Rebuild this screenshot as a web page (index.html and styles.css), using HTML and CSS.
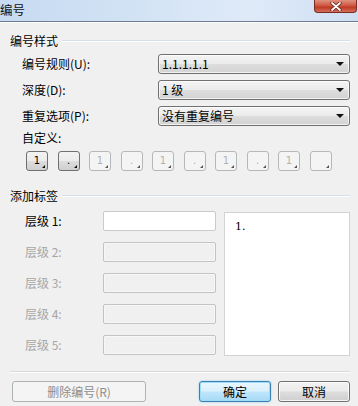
FILE: index.html
```html
<!DOCTYPE html>
<html lang="zh">
<head>
<meta charset="utf-8">
<link rel="stylesheet" href="styles.css">
</head>
<body>
<div class="win">
  <div class="titlebar">
    <span class="title">编号</span>
    <span class="close">
      <svg width="12" height="9" viewBox="0 0 12 9"><path d="M2 1 L10 8 M10 1 L2 8" stroke="#5a1a12" stroke-width="3.2" stroke-linecap="round"/><path d="M2 1 L10 8 M10 1 L2 8" stroke="#fff" stroke-width="1.8" stroke-linecap="round"/></svg>
    </span>
  </div>
  <div class="body">
    <div class="group-head"><span>编号样式</span><i class="rule"></i></div>
    <div class="field"><span class="lbl">编号规则(U):</span><div class="combo"><span>1.1.1.1.1</span><i class="arrow"></i></div></div>
    <div class="field"><span class="lbl">深度(D):</span><div class="combo"><span>1 级</span><i class="arrow"></i></div></div>
    <div class="field"><span class="lbl">重复选项(P):</span><div class="combo"><span>没有重复编号</span><i class="arrow"></i></div></div>
    <div class="custom-label">自定义:</div>
    <div class="chips">
      <span class="chip on">1</span>
      <span class="chip on">.</span>
      <span class="chip">1</span>
      <span class="chip">.</span>
      <span class="chip">1</span>
      <span class="chip">.</span>
      <span class="chip">1</span>
      <span class="chip">.</span>
      <span class="chip">1</span>
      <span class="chip"></span>
    </div>
    <div class="group-head second"><span>添加标签</span><i class="rule"></i></div>
    <div class="levels">
      <div class="level-list">
        <div class="level"><span class="llbl">层级 1:</span><span class="inp active"></span></div>
        <div class="level off"><span class="llbl">层级 2:</span><span class="inp"></span></div>
        <div class="level off"><span class="llbl">层级 3:</span><span class="inp"></span></div>
        <div class="level off"><span class="llbl">层级 4:</span><span class="inp"></span></div>
        <div class="level off"><span class="llbl">层级 5:</span><span class="inp"></span></div>
      </div>
      <div class="preview">1.</div>
    </div>
    <div class="sep"></div>
    <div class="actions">
      <span class="btn del">删除编号(R)</span>
      <span class="grow"></span>
      <span class="btn ok">确定</span>
      <span class="btn">取消</span>
    </div>
  </div>
</div>
</body>
</html>
```

FILE: styles.css
```css
* { box-sizing: border-box; }
html, body { margin: 0; padding: 0; }
body {
  width: 358px;
  height: 406px;
  overflow: hidden;
  background: #f0f0f0;
  font-family: "Noto Sans CJK SC", "DejaVu Sans", sans-serif;
  font-size: 12px;
  color: #000;
}
.win { width: 358px; height: 406px; display: flex; flex-direction: column; }
.titlebar {
  height: 22px;
  flex: none;
  display: flex;
  justify-content: space-between;
  align-items: flex-start;
  background: linear-gradient(90deg, #c6daf1 0%, #d3e3f5 40%, #dfeaf8 70%, #cfdff2 100%);
  border-bottom: 1px solid #6d7c8e;
  box-shadow: 0 1px 0 #fbfcfd;
}
.title { font-size: 12.5px; line-height: 18px; padding-top: 1px; color: #111; }
.close {
  width: 43px;
  height: 13px;
  margin-right: 1px;
  display: flex;
  justify-content: center;
  align-items: center;
  background: linear-gradient(180deg, #e0907f 0%, #cf5a45 45%, #c03a22 60%, #d2705c 100%);
  border: 1px solid #7a2c20;
  border-top: none;
  border-radius: 0 0 4px 4px;
}
.body { flex: 1; padding: 12px 8px 0 10px; display: flex; flex-direction: column; }
.group-head { height: 14px; display: flex; align-items: center; line-height: 14px; }
.group-head span { font-size: 12px; }
.rule { flex: 1; height: 2px; margin-left: 4px; border-top: 1px solid #d5dfe5; border-bottom: 1px solid #fff; }
.field { height: 20px; margin-top: 6px; display: flex; align-items: center; padding-left: 12px; }
.lbl { width: 136px; line-height: 14px; }
.combo {
  flex: 1;
  height: 20px;
  border: 1px solid #707070;
  border-radius: 3px;
  background: linear-gradient(180deg, #f4f4f4 0%, #ebebeb 48%, #dddddd 52%, #d3d3d3 100%);
  display: flex;
  align-items: center;
  padding: 0 5px 0 3px;
  box-shadow: inset 0 0 0 1px rgba(255,255,255,0.7);
}
.combo span { flex: 1; line-height: 16px; }
.arrow {
  width: 0; height: 0;
  border-left: 4px solid transparent;
  border-right: 4px solid transparent;
  border-top: 4px solid #111;
}
.custom-label { margin-top: 4px; height: 16px; line-height: 16px; padding-left: 12px; }
.chips { margin-top: 5px; height: 20px; display: flex; gap: 9.5px; padding-left: 16px; }
.chip {
  position: relative;
  width: 22px;
  height: 20px;
  border: 1px solid #b4b8bb;
  border-radius: 3px;
  background: #f4f4f4;
  color: #b0b0b0;
  font-family: "DejaVu Sans", sans-serif;
  font-size: 10px;
  line-height: 18px;
  text-align: center;
}
.chip::after {
  content: "";
  position: absolute;
  right: 2px;
  bottom: 2px;
  width: 0; height: 0;
  border-left: 3px solid transparent;
  border-bottom: 3px solid #555;
}
.chip.on {
  border-color: #707070;
  color: #000;
  background: linear-gradient(180deg, #f2f2f2 0%, #ebebeb 48%, #dddddd 52%, #cfcfcf 100%);
}
.chip.on::after { border-bottom-color: #111; }
.second { margin-top: 18px; }
.levels { margin-top: 8px; display: flex; align-items: flex-start; }
.level-list { width: 206px; display: flex; flex-direction: column; gap: 11px; }
.level { height: 20px; display: flex; align-items: center; padding-left: 15px; }
.llbl { width: 78px; line-height: 14px; }
.inp {
  width: 113px;
  height: 20px;
  border: 1px solid #c3c3c3;
  border-radius: 2px;
  background: #f0f0f0;
  box-shadow: inset 0 0 0 1px #f7f7f7;
}
.inp.active { background: #fff; border-color: #c8cace; box-shadow: none; }
.off .llbl { color: #a6a6a6; }
.preview {
  margin-left: 8px;
  margin-top: 1px;
  flex: 1;
  height: 144px;
  background: #fff;
  border: 1px solid #d3d3d3;
  padding: 7px 0 0 10px;
  font-family: "DejaVu Serif", serif;
  font-size: 11px;
  line-height: 14px;
}
.sep { margin-top: 15px; height: 2px; border-top: 1px solid #d8d8d8; border-bottom: 1px solid #fff; }
.actions { margin-top: 8px; display: flex; height: 21px; padding-left: 2px; }
.grow { flex: 1; }
.btn {
  width: 72px;
  height: 21px;
  border: 1px solid #707070;
  border-radius: 3px;
  background: linear-gradient(180deg, #f2f2f2 0%, #ebebeb 48%, #dddddd 52%, #cfcfcf 100%);
  display: flex;
  align-items: center;
  justify-content: center;
  line-height: 14px;
  box-shadow: inset 0 0 0 1px rgba(255,255,255,0.8);
}
.btn + .btn { margin-left: 7px; }
.btn.del {
  width: 134px;
  border-color: #adb2b5;
  background: #f4f4f4;
  color: #8d8d8d;
  box-shadow: none;
}
.btn.ok {
  border-color: #3c7fb1;
  background: linear-gradient(180deg, #eaf6fd 0%, #d9f0fc 48%, #bee6fd 52%, #a7d9f5 100%);
  box-shadow: inset 0 0 0 1px #9fdcf7, 0 0 2px #7fc8ee;
}
```
